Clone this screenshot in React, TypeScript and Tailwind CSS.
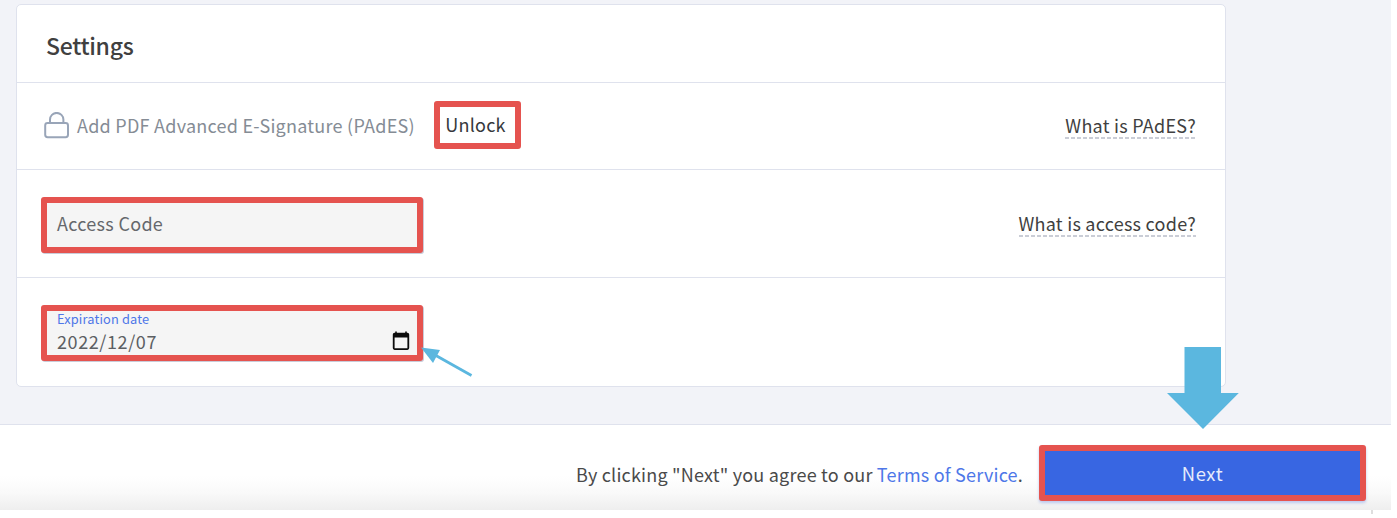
import type { ReactNode } from "react";

function LockIcon() {
  return (
    <svg width="26" height="28" viewBox="0 0 26 28" fill="none" stroke="#99a5b8" strokeWidth="2">
      <rect x="1.2" y="11" width="22.8" height="14.2" rx="2.4" />
      <path d="M6 11V7.6a6.7 6.7 0 0 1 13.4 0V11" />
    </svg>
  );
}

function CalendarIcon() {
  return (
    <svg width="18" height="20" viewBox="0 0 18 20">
      <path
        fill="#0c0c0c"
        fillRule="evenodd"
        d="M3.2.6h1.6v1.2h8.4V.6h1.6v1.2h.6a1.8 1.8 0 0 1 1.8 1.8v13.5a1.8 1.8 0 0 1-1.8 1.8H2.6a1.8 1.8 0 0 1-1.8-1.8V3.6a1.8 1.8 0 0 1 1.8-1.8h.6zM2.6 6.4v10.8h12.8V6.4z"
      />
    </svg>
  );
}

function HelpLink({ children }: { children: ReactNode }) {
  return (
    <div className="flex flex-col text-[18px] tracking-[0.25px] leading-6 text-[#404040] whitespace-nowrap">
      <span>{children}</span>
      <svg className="w-0 min-w-full h-[2px]" aria-hidden="true">
        <line x1="0" y1="1" x2="100%" y2="1" stroke="#b9bdc9" strokeWidth="1.6" strokeDasharray="4 2" />
      </svg>
    </div>
  );
}

function Field({ children }: { children: ReactNode }) {
  return (
    <div className="w-[382px] h-[56px] rounded-[3px] border-6 border-[#e5534f] bg-[#f5f5f5] shadow-[1px_1px_0_#c9ccd9]">
      {children}
    </div>
  );
}

export default function App() {
  return (
    <div className="w-[1397px] h-[518px] overflow-hidden bg-white font-['Noto_Sans_CJK_JP','Noto_Sans_CJK_SC',sans-serif]">
      <div className="relative w-[1391px] h-[510px] flex flex-col bg-[#f2f3f8]">
        {/* Settings card */}
        <section className="ml-4 mt-1 w-[1210px] h-[383px] shrink-0 rounded-[5px] border border-[#dfe2ed] bg-white">
          <div className="h-[78px] pl-[29px] pt-[2px] flex items-center border-b border-[#dfe2ed]">
            <h2 className="text-[23px] leading-8 tracking-[-0.3px] font-medium text-[#404040]">Settings</h2>
          </div>

          <div className="h-[87px] pl-[27px] pr-[29px] flex items-center border-b border-[#dfe2ed]">
            <LockIcon />
            <span className="-mt-[2px] ml-[7px] w-[357px] text-[18px] tracking-[0.25px] leading-6 text-[#858c95] whitespace-nowrap">
              Add PDF Advanced E-Signature (PAdES)
            </span>
            <button className="-mt-[3px] w-[87px] h-[48px] pr-1 flex items-center justify-center rounded-[3px] border-6 border-[#e5534f] text-[18px] tracking-[0.25px] text-[#36383c]">
              Unlock
            </button>
            <div className="ml-auto -mt-px">
              <HelpLink>What is PAdES?</HelpLink>
            </div>
          </div>

          <div className="h-[108px] pl-6 pr-[29px] pt-[2px] flex items-center justify-between border-b border-[#dfe2ed]">
            <Field>
              <div className="h-full pl-[10px] pb-[2px] flex items-center text-[18px] tracking-[0.3px] text-[#65686c]">
                Access Code
              </div>
            </Field>
            <div className="-mt-[2px]">
              <HelpLink>What is access code?</HelpLink>
            </div>
          </div>

          <div className="h-[108px] pl-6 pt-[2px] flex items-center">
            <Field>
              <div className="h-full pl-[10px] pr-[7px] flex items-center justify-between">
                <div className="flex flex-col -mt-[4px]">
                  <span className="text-[12.8px] tracking-[0.15px] leading-[18px] text-[#4e77e8]">
                    Expiration date
                  </span>
                  <span className="pt-px text-[18px] tracking-[0.6px] leading-6 text-[#5c5f63]">2022/12/07</span>
                </div>
                <div className="pt-[15px]">
                  <CalendarIcon />
                </div>
              </div>
            </Field>
          </div>
        </section>

        {/* Footer */}
        <footer className="mt-[37px] h-[86px] pr-[25px] flex items-center justify-end border-t border-[#dfe2ed] bg-[linear-gradient(#fff_60%,#f9f9f9_80%,#eeeeee)]">
          <p className="mt-[12px] mr-[16px] text-[18px] tracking-[0.21px] leading-6 text-[#4a4a4a] whitespace-nowrap">
            By clicking "Next" you agree to our <a className="text-[#4e77e8]">Terms of Service</a>.
          </p>
          <button className="mt-[11px] w-[327px] h-[56px] pt-[2px] flex items-center justify-center rounded-[3px] border-6 border-[#e5534f] bg-[#3866e2] text-[18.4px] tracking-[0.6px] text-[#e6ebfb] shadow-[0_2px_3px_#bcc8ee]">
            Next
          </button>
        </footer>

        {/* Annotation arrows */}
        <svg className="absolute left-[421px] top-[346px]" width="54" height="32" viewBox="0 0 54 32">
          <path d="M14 9 50.5 29.5" stroke="#5bb7df" strokeWidth="2.8" fill="none" />
          <path d="M0 1.5 19 4 12 17z" fill="#5bb7df" />
        </svg>
        <svg className="absolute left-[1167px] top-[347px]" width="72" height="83" viewBox="0 0 72 83">
          <path d="M17.5 0h36.5v46h17.8L36 82 0 46h17.5z" fill="#5bb7df" />
        </svg>
      </div>
      <div className="ml-[1371px] mt-0 w-[2px] h-1 bg-[#dedede]" />
    </div>
  );
}
